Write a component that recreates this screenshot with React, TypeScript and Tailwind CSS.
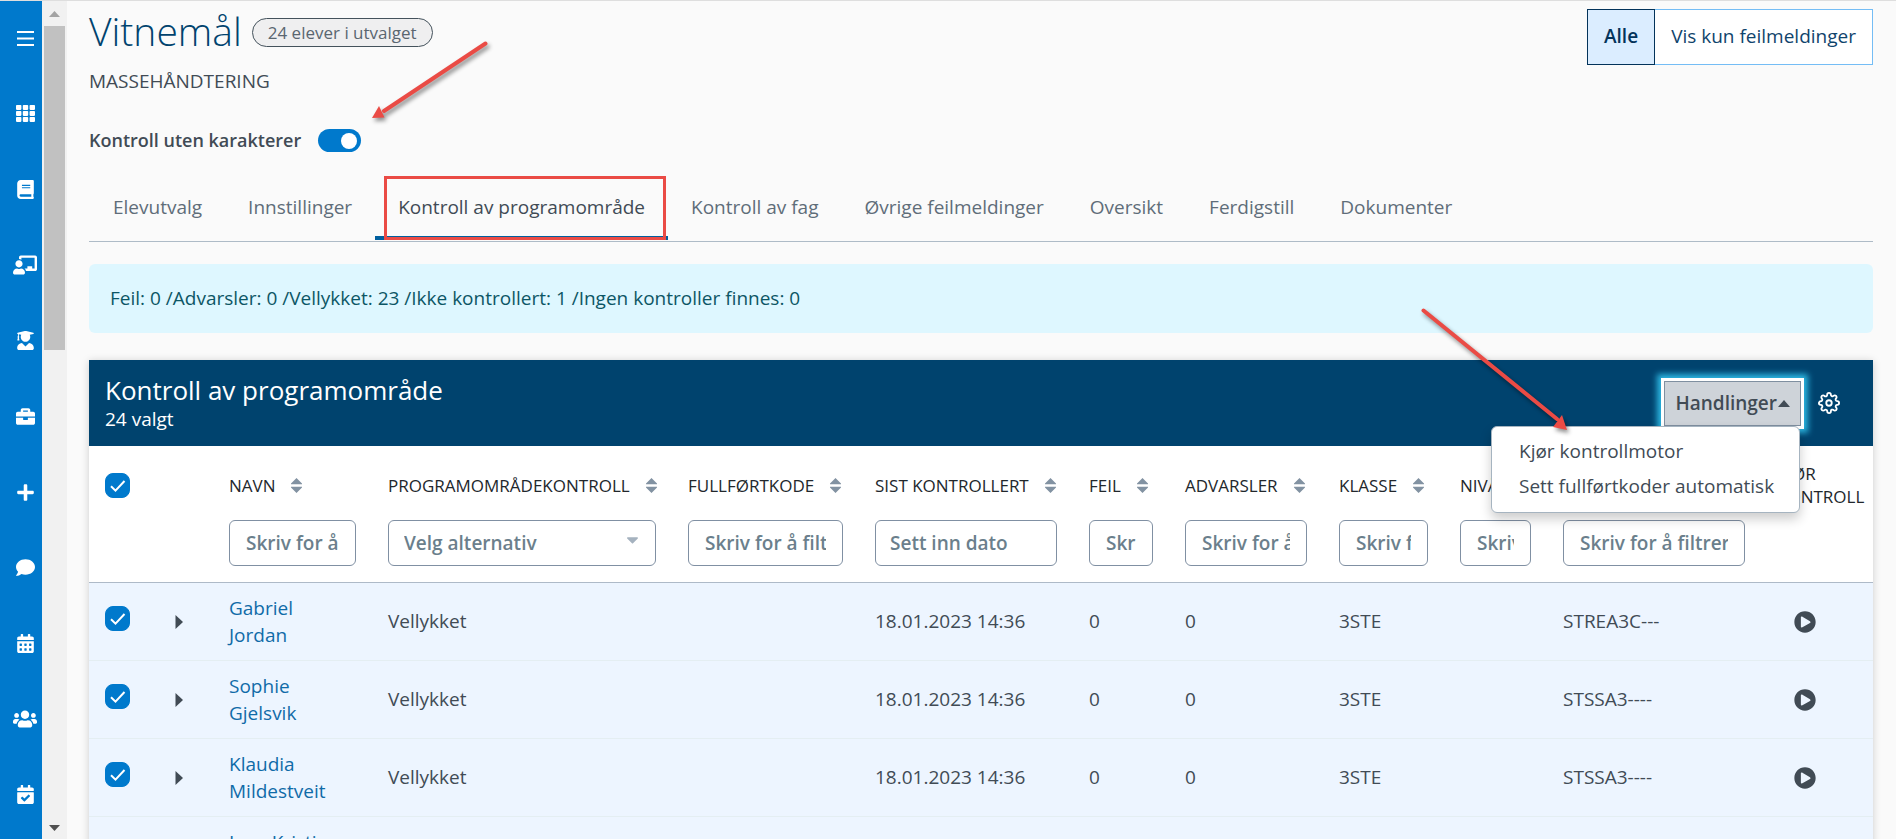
import { useState } from "react";
import type { ReactNode } from "react";
import { FiSettings } from "react-icons/fi";
import {
  FaBook,
  FaBriefcase,
  FaCalendarAlt,
  FaCalendarCheck,
  FaCaretDown,
  FaChalkboardTeacher,
  FaComment,
  FaPlayCircle,
  FaPlus,
  FaUserGraduate,
  FaUsers,
} from "react-icons/fa";

const tabs = [
  "Elevutvalg",
  "Innstillinger",
  "Kontroll av programområde",
  "Kontroll av fag",
  "Øvrige feilmeldinger",
  "Oversikt",
  "Ferdigstill",
  "Dokumenter",
];

const columns = [
  { label: "Navn", width: "w-[159px]", filter: "text" },
  { label: "Programområdekontroll", width: "w-[300px]", filter: "select" },
  { label: "Fullførtkode", width: "w-[187px]", filter: "text" },
  { label: "Sist kontrollert", width: "w-[214px]", filter: "date" },
  { label: "Feil", width: "w-[96px]", filter: "text" },
  { label: "Advarsler", width: "w-[154px]", filter: "text" },
  { label: "Klasse", width: "w-[121px]", filter: "text" },
  { label: "Nivå", width: "w-[103px]", filter: "text" },
  { label: "Område", width: "w-[214px]", filter: "text" },
];

const rows = [
  { name: "Gabriel Jordan", code: "STREA3C---" },
  { name: "Sophie Gjelsvik", code: "STSSA3----" },
  { name: "Klaudia Mildestveit", code: "STSSA3----" },
  { name: "Inga Kristin Berg", code: "STSSA3----" },
];

function MenuIcon() {
  return (
    <svg viewBox="0 0 17 15" className="w-[17px]" stroke="currentColor" strokeWidth="2">
      <path d="M0 1h17M0 7.5h17M0 14h17" />
    </svg>
  );
}

function GridIcon() {
  return (
    <svg viewBox="0 0 19 17" className="w-[19px]" fill="currentColor">
      {[0, 6.8, 13.6].map((x) =>
        [0, 6, 12].map((y) => <rect key={`${x}-${y}`} x={x} y={y} width="5.4" height="4.9" rx="0.8" />)
      )}
    </svg>
  );
}

function SortIcon() {
  return (
    <svg viewBox="0 0 11 15" className="w-[11px] shrink-0" fill="#8292a2">
      <path d="M5.5 0 11 5.5V6.2H0V5.5ZM5.5 15 0 9.5V8.8h11V9.5Z" />
    </svg>
  );
}

const menu: { label: string; icon: ReactNode }[] = [
  { label: "Meny", icon: <MenuIcon /> },
  { label: "Apper", icon: <GridIcon /> },
  { label: "Fag", icon: <FaBook size={19} /> },
  { label: "Undervisning", icon: <FaChalkboardTeacher size={24} /> },
  { label: "Elever", icon: <FaUserGraduate size={19} /> },
  { label: "Arbeid", icon: <FaBriefcase size={19} /> },
  { label: "Ny", icon: <FaPlus size={19} /> },
  { label: "Meldinger", icon: <FaComment size={19} /> },
  { label: "Kalender", icon: <FaCalendarAlt size={19} /> },
  { label: "Grupper", icon: <FaUsers size={24} /> },
  { label: "Fravær", icon: <FaCalendarCheck size={19} /> },
];

function Checkbox({ label }: { label: string }) {
  return (
    <label className="relative block size-[25px]">
      <input
        type="checkbox"
        defaultChecked
        aria-label={label}
        className="peer block size-[25px] appearance-none rounded-lg border border-[#0079cc] bg-white checked:bg-[#0079cc]"
      />
      <svg
        viewBox="0 0 25 25"
        className="pointer-events-none absolute inset-0 hidden peer-checked:block"
        fill="none"
        stroke="white"
        strokeWidth="2"
      >
        <path d="M6 13.2 10.5 17.6 19.5 8" />
      </svg>
    </label>
  );
}

const filterBox =
  "h-[46px] w-full rounded-md border border-[#8090a3] bg-white text-[19px] font-semibold text-[#6b7f8c] placeholder:text-[#6b7f8c] placeholder:opacity-100";

function Filter({ type, label }: { type: string; label: string }) {
  if (type === "select") {
    return (
      <div className="relative">
        <select aria-label={label} className={`${filterBox} appearance-none px-[15px]`}>
          <option>Velg alternativ</option>
        </select>
        <FaCaretDown size={19} className="pointer-events-none absolute top-[10px] right-[14px] text-[#a5b2bf]" />
      </div>
    );
  }
  if (type === "date") {
    return <input aria-label={label} placeholder="Sett inn dato" className={`${filterBox} px-[14px]`} />;
  }
  return <input aria-label={label} placeholder="Skriv for å filtrere" className={`${filterBox} px-4`} />;
}

function Arrow({ className, line, head, box }: { className: string; line: string; head: string; box: string }) {
  return (
    <svg viewBox={box} className={`pointer-events-none absolute z-30 overflow-visible drop-shadow-[2px_3px_2px_rgba(0,0,0,0.45)] ${className}`}>
      <path d={line} stroke="#ea4b45" strokeWidth="4" strokeLinecap="round" />
      <path d={head} fill="#ea4b45" />
    </svg>
  );
}

export default function App() {
  const [active, setActive] = useState("Kontroll av programområde");

  return (
    <div className="flex h-screen overflow-hidden border-t border-[#dedede] bg-[#fafafa] font-['Open_Sans',sans-serif] text-[19px] leading-[27px] text-[#414b55]">
      <nav className="flex w-[42px] shrink-0 flex-col items-end justify-between bg-[#0079cc] pt-[27px] pr-1 pb-[34px] text-white">
        {menu.map((item) => (
          <button key={item.label} aria-label={item.label} className="flex h-5 w-[26px] items-center justify-center">
            {item.icon}
          </button>
        ))}
      </nav>

      <div className="flex w-[25px] shrink-0 flex-col items-center justify-between bg-[#f1f1f1] px-[2px] pt-[10px] pb-2">
        <div className="flex w-full flex-col items-center gap-[9px]">
          <svg viewBox="0 0 11 6" className="w-[11px]" fill="#a3a3a3">
            <path d="M0 6 5.5 0 11 6Z" />
          </svg>
          <div className="h-[324px] w-[21px] bg-[#c1c1c1]" />
        </div>
        <svg viewBox="0 0 11 6" className="w-[11px]" fill="#505050">
          <path d="M0 0h11L5.5 6Z" />
        </svg>
      </div>

      <main className="relative min-w-0 flex-1 overflow-hidden pt-2 pr-[23px] pl-[22px]">
        <header className="flex items-start justify-between">
          <div>
            <div className="flex h-[44px] items-center gap-[10px]">
              <h1 className="text-[39px] leading-[44px] font-light text-[#00436e]">Vitnemål</h1>
              <span className="mt-[3px] flex h-[29px] items-center rounded-full border border-[#44525c] bg-[#efeff0] px-[15px] text-[17px] text-[#5a6670]">
                24 elever i utvalget
              </span>
            </div>
            <p className="mt-[15px] uppercase">Massehåndtering</p>
            <label className="mt-8 flex items-center gap-[17px] text-[18px] font-semibold">
              Kontroll uten karakterer
              <span className="relative flex items-center">
                <input type="checkbox" role="switch" defaultChecked className="peer h-[23px] w-[43px] appearance-none rounded-full bg-gray-400 checked:bg-[#0079cc]" />
                <span className="pointer-events-none absolute left-1 size-4 rounded-full bg-white peer-checked:right-1 peer-checked:left-auto" />
              </span>
            </label>
          </div>
          <div className="flex h-14 text-[#0f446c]">
            <button className="border border-[#03335a] bg-[#dbedff] px-4 pb-[2px] font-semibold text-[#03335a]">Alle</button>
            <button className="border border-l-0 border-[#74bdf5] bg-white px-4 pb-[2px]">Vis kun feilmeldinger</button>
          </div>
        </header>

        <Arrow className="top-[41px] left-[305px] h-[76px] w-[116px]" box="0 0 116 76" line="M113.5 1.5 12 69" head="M0 76 7 64 12.5 75.5Z" />

        <div role="tablist" className="mt-[22px] flex border-b border-[#aebbc7] pb-px pl-px text-[#5f6d79]">
          {tabs.map((tab) => (
            <button
              key={tab}
              role="tab"
              aria-selected={tab === active}
              onClick={() => setActive(tab)}
              className={
                tab === active
                  ? "relative h-16 border-b-4 border-[#005f9e] px-[23px] pt-[2px] text-[#414b55]"
                  : "h-16 border-b-4 border-transparent px-[23px] pt-[2px]"
              }
            >
              {tab}
              {tab === active && <span className="absolute top-0 right-[2px] -bottom-1 left-[9px] border-3 border-[#ea4b45]" />}
            </button>
          ))}
        </div>

        <div role="status" className="mt-[22px] rounded-md bg-[#def7ff] px-[21px] py-[21px] text-[#0c5665]">
          Feil: 0 /Advarsler: 0 /Vellykket: 23 /Ikke kontrollert: 1 /Ingen kontroller finnes: 0
        </div>

        <section className="relative mt-[27px] bg-white shadow-[0_1px_8px_rgba(0,0,0,0.18)]">
          <div className="flex h-[86px] items-center justify-between bg-[#00436e] pr-[33px] pl-4 text-white">
            <div>
              <h2 className="text-[26px] leading-[31px]">Kontroll av programområde</h2>
              <p className="leading-[26px] font-medium">24 valgt</p>
            </div>
            <div className="flex items-center gap-[17px]">
              <div className="relative">
                <button className="flex h-[45px] items-center gap-px border border-[#7f8fa0] bg-[#ced3d9] px-[10px] font-semibold text-[#414b55] shadow-[0_0_0_3px_#fff,0_0_6px_7px_#2bb5e0]">
                  Handlinger
                  <svg viewBox="0 0 12 7" className="w-3" fill="currentColor">
                    <path d="M0 7 6 0 12 7Z" />
                  </svg>
                </button>
                <ul className="absolute top-[45px] right-px z-20 w-[309px] rounded-md border border-[#a6b4c0] bg-white pt-[7px] pb-2 text-[#414b55] shadow-[0_6px_12px_rgba(0,0,0,0.2)]">
                  <li>
                    <button className="w-full py-1 pl-[27px] text-left whitespace-nowrap">Kjør kontrollmotor</button>
                  </li>
                  <li>
                    <button className="w-full py-1 pl-[27px] text-left whitespace-nowrap">Sett fullførtkoder automatisk</button>
                  </li>
                </ul>
              </div>
              <button aria-label="Innstillinger">
                <FiSettings size={22} />
              </button>
            </div>
          </div>

          <Arrow className="top-[-51px] left-[1333px] h-[122px] w-[146px]" box="0 0 146 122" line="M1.5 1.5 135 110" head="M145 121 131 118 140 106Z" />

          <table className="w-full table-fixed text-left">
            <thead className="border-b border-[#aebac8] align-top">
              <tr className="text-[17px] leading-[23px] text-[#22272c] uppercase">
                <th className="w-[70px] pt-[27px] pl-4">
                  <Checkbox label="Velg alle" />
                </th>
                <th className="w-[54px]" />
                {columns.map((col) => (
                  <th key={col.label} className={`${col.width} h-[74px] pt-4 pr-3 pb-3 pl-4 align-middle font-normal`}>
                    <button className="flex items-center gap-4 whitespace-nowrap uppercase">
                      {col.label}
                      <SortIcon />
                    </button>
                  </th>
                ))}
                <th className="w-[112px] pt-4 pb-3 pl-4 font-normal">Kjør kontroll</th>
              </tr>
              <tr>
                <td colSpan={2} />
                {columns.map((col) => (
                  <td key={col.label} className="px-4 pb-4">
                    <Filter type={col.filter} label={col.label} />
                  </td>
                ))}
                <td />
              </tr>
            </thead>
            <tbody>
              {rows.map((row) => (
                <tr key={row.name} className="h-[78px] border-b border-[#e4eef2] bg-[#edf5ff]">
                  <td className="pb-[6px] pl-4">
                    <Checkbox label={`Velg ${row.name}`} />
                  </td>
                  <td className="pl-4">
                    <button aria-label="Vis detaljer" className="block">
                      <svg viewBox="0 0 8 14" className="w-2" fill="currentColor">
                        <path d="M0.5 0 8 7 0.5 14Z" />
                      </svg>
                    </button>
                  </td>
                  <td className="px-4 py-[11px]">
                    <a href="#" className="text-[#106ba8]">{row.name}</a>
                  </td>
                  <td className="px-4">Vellykket</td>
                  <td />
                  <td className="px-4">18.01.2023 14:36</td>
                  <td className="px-4">0</td>
                  <td className="px-4">0</td>
                  <td className="px-4">3STE</td>
                  <td />
                  <td className="px-4">{row.code}</td>
                  <td className="pl-[33px]">
                    <button aria-label="Kjør kontroll" className="block">
                      <FaPlayCircle size={22} />
                    </button>
                  </td>
                </tr>
              ))}
            </tbody>
          </table>
        </section>
      </main>
    </div>
  );
}
